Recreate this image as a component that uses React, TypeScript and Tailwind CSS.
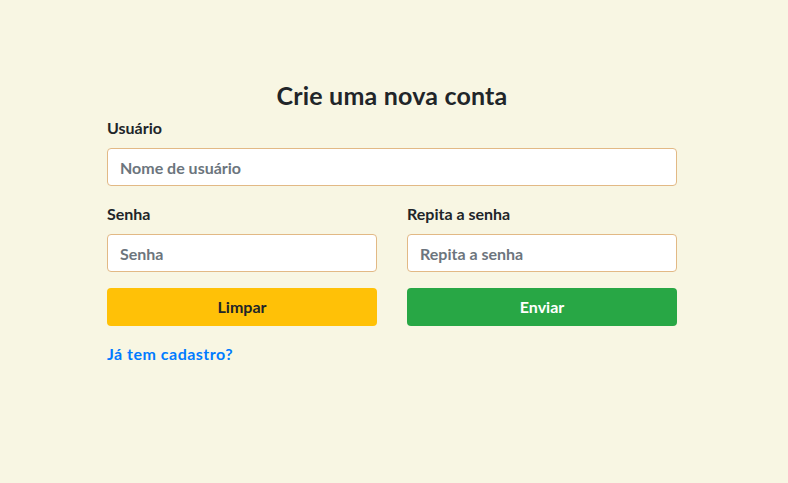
import { useState } from "react";

const Cadastro = () => {
  const [usuario, setUsuario] = useState<string>("");
  const [senha, setSenha] = useState<string>("");
  const [repetir, setRepetir] = useState<string>("");

  const limpar = () => {
    setUsuario("");
    setSenha("");
    setRepetir("");
  };

  return (
    <div
      className="min-h-[483px] w-full bg-[#f8f6e3] text-[#212529]"
      style={{ fontFamily: "Lato, 'Open Sans', sans-serif" }}
    >
      <form
        className="ml-[107px] w-[570px] pt-[80px]"
        onSubmit={(e) => e.preventDefault()}
      >
        {/* Titulo */}
        <h1 className="text-center text-[25px] font-bold leading-[30px] tracking-[0.2px]">
          Crie uma nova conta
        </h1>

        <div className="mt-[6px] flex flex-col">
          <label className="mb-[8px] text-[16px] font-bold leading-[24px]">
            Usuário
          </label>
          <input
            type="text"
            value={usuario}
            onChange={(e) => setUsuario(e.target.value)}
            placeholder="Nome de usuário"
            className="h-[38px] rounded-[4px] border border-[#e2b985] bg-white px-[12px] text-[16px] font-bold placeholder:text-[#6c757d] outline-none"
          />
        </div>

        <div className="mt-[16px] grid grid-cols-2 gap-x-[30px]">
          <div className="flex flex-col">
            <label className="mb-[8px] text-[16px] font-bold leading-[24px]">
              Senha
            </label>
            <input
              type="password"
              value={senha}
              onChange={(e) => setSenha(e.target.value)}
              placeholder="Senha"
              className="h-[38px] rounded-[4px] border border-[#e2b985] bg-white px-[12px] text-[16px] font-bold placeholder:text-[#6c757d] outline-none"
            />
          </div>
          <div className="flex flex-col">
            <label className="mb-[8px] text-[16px] font-bold leading-[24px]">
              Repita a senha
            </label>
            <input
              type="password"
              value={repetir}
              onChange={(e) => setRepetir(e.target.value)}
              placeholder="Repita a senha"
              className="h-[38px] rounded-[4px] border border-[#e2b985] bg-white px-[12px] text-[16px] font-bold placeholder:text-[#6c757d] outline-none"
            />
          </div>
        </div>

        {/* Botoes */}
        <div className="mt-[16px] grid grid-cols-2 gap-x-[30px]">
          <button
            type="button"
            onClick={limpar}
            className="h-[38px] rounded-[4px] bg-[#ffc107] text-[16px] font-bold text-[#212529]"
          >
            Limpar
          </button>
          <button
            type="submit"
            className="h-[38px] rounded-[4px] bg-[#28a745] text-[16px] font-bold text-white"
          >
            Enviar
          </button>
        </div>

        <a
          href="#"
          className="mt-[16px] inline-block text-[16px] font-bold leading-[24px] tracking-[0.5px] text-[#007bff]"
        >
          Já tem cadastro?
        </a>
      </form>
    </div>
  );
};

export default function App() {
  return <Cadastro />;
}
